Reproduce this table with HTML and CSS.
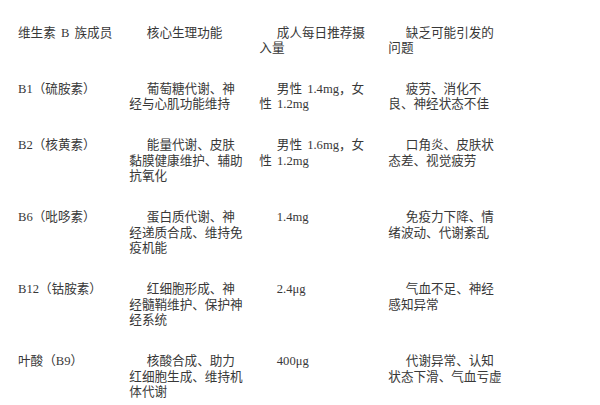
FILE: index.html
```html
<!DOCTYPE html>
<html lang="zh-CN">
<head>
<meta charset="utf-8">
<title>维生素 B 族成员</title>
<link rel="stylesheet" href="styles.css">
</head>
<body>
<div class="table">
  <div class="cell first">维生素 B 族成员</div>
  <div class="cell">核心生理功能</div>
  <div class="cell">成人每日推荐摄入量</div>
  <div class="cell">缺乏可能引发的问题</div>

  <div class="cell first">B1（硫胺素）</div>
  <div class="cell">葡萄糖代谢、神经与心肌功能维持</div>
  <div class="cell">男性 1.4mg，女性 1.2mg</div>
  <div class="cell">疲劳、消化不良、神经状态不佳</div>

  <div class="cell first">B2（核黄素）</div>
  <div class="cell">能量代谢、皮肤黏膜健康维护、辅助抗氧化</div>
  <div class="cell">男性 1.6mg，女性 1.2mg</div>
  <div class="cell">口角炎、皮肤状态差、视觉疲劳</div>

  <div class="cell first">B6（吡哆素）</div>
  <div class="cell">蛋白质代谢、神经递质合成、维持免疫机能</div>
  <div class="cell">1.4mg</div>
  <div class="cell">免疫力下降、情绪波动、代谢紊乱</div>

  <div class="cell first">B12（钴胺素）</div>
  <div class="cell">红细胞形成、神经髓鞘维护、保护神经系统</div>
  <div class="cell">2.4μg</div>
  <div class="cell">气血不足、神经感知异常</div>

  <div class="cell first">叶酸（B9）</div>
  <div class="cell">核酸合成、助力红细胞生成、维持机体代谢</div>
  <div class="cell">400μg</div>
  <div class="cell">代谢异常、认知状态下滑、气血亏虚</div>
</div>
</body>
</html>
```
FILE: styles.css
```css
html, body {
  margin: 0;
  padding: 0;
  background: #ffffff;
}

body {
  font-family: "Liberation Serif", "Noto Sans CJK SC", serif;
  font-size: 12.6px;
  line-height: 15.6px;
  color: #383838;
  word-spacing: 2px;
}

.table {
  display: grid;
  grid-template-columns: 111.3px 130px 129px 1fr;
  row-gap: 25.2px;
  padding: 25.5px 0 0 18px;
  align-items: start;
}

.cell {
  width: 115px;
  text-indent: 17.5px;
}

.cell.first {
  width: auto;
  text-indent: 0;
  white-space: nowrap;
}
```
